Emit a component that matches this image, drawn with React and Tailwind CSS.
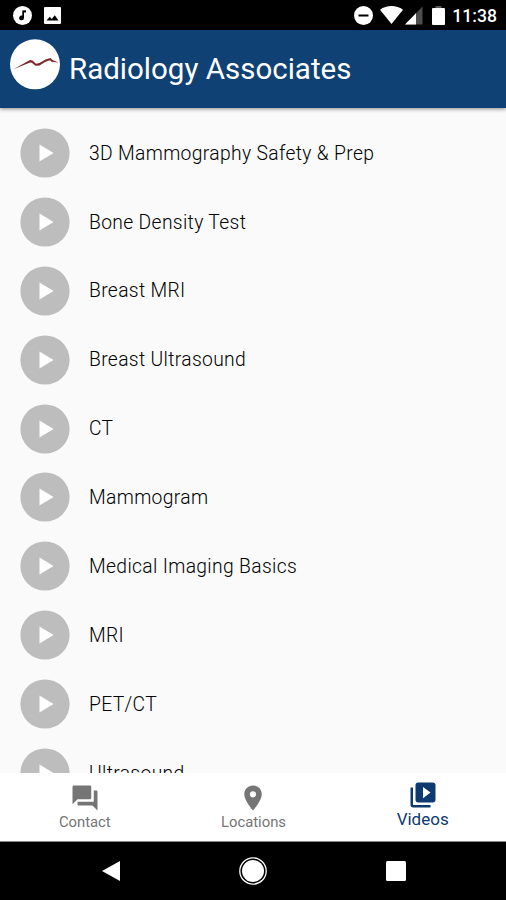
import { useState } from 'react'
import { MdForum, MdPlace, MdVideoLibrary } from 'react-icons/md'

const videos = [
    '3D Mammography Safety & Prep',
    'Bone Density Test',
    'Breast MRI',
    'Breast Ultrasound',
    'CT',
    'Mammogram',
    'Medical Imaging Basics',
    'MRI',
    'PET/CT',
    'Ultrasound',
]

const tabs = [
    { name: 'Contact', icon: MdForum },
    { name: 'Locations', icon: MdPlace },
    { name: 'Videos', icon: MdVideoLibrary },
]

function StatusBar() {
    return (
        <div className="flex h-[30px] shrink-0 items-center justify-between bg-black pl-[13px] pr-[9px] text-white">
            <div className="flex items-center gap-3">
                <svg width="19" height="19" viewBox="0 0 19 19">
                    <circle cx="9.5" cy="9.5" r="9.5" fill="#fff" />
                    <path d="M9.3 4.6 L13 4.2 V6.6 H11 V12 A2.4 2.4 0 1 1 9.3 9.6 Z" fill="#000" />
                </svg>
                <svg width="17" height="17" viewBox="0 0 17 17">
                    <rect width="17" height="17" rx="1" fill="#fff" />
                    <path d="M2.5 13.5 L5.8 9.8 L7.8 12 L10.8 8.2 L14.5 13.5 Z" fill="#000" />
                </svg>
            </div>
            <div className="flex items-center">
                <svg width="19" height="19" viewBox="0 0 19 19">
                    <circle cx="9.5" cy="9.5" r="9.5" fill="#fff" />
                    <rect x="4.5" y="8.5" width="10" height="2" fill="#000" />
                </svg>
                <svg className="ml-[7px]" width="23" height="18" viewBox="0 0 23 18">
                    <path d="M0 3.8 C6.5 -1.2 16.5 -1.2 23 3.8 L11.5 18 Z" fill="#fff" />
                </svg>
                <svg className="ml-[2px]" width="18" height="19" viewBox="0 0 18 19">
                    <path d="M0 18.5 L17.5 0.5 V18.5 Z" fill="#4d4d4d" />
                    <path d="M0 18.5 L11 7.2 V18.5 Z" fill="#fff" />
                </svg>
                <svg className="ml-[9px]" width="13" height="19" viewBox="0 0 13 19">
                    <rect x="3.5" y="0" width="6" height="3" fill="#555" />
                    <rect x="0" y="2" width="13" height="17" rx="1" fill="#fff" />
                </svg>
                <span className="ml-[7px] mt-px text-[17.6px] leading-[30px] font-medium">11:38</span>
            </div>
        </div>
    )
}

function Header() {
    return (
        <div className="z-10 flex h-[78px] shrink-0 bg-[#0f4174] pl-[10px] pt-[9px] shadow-[0_1px_4px_rgba(0,0,0,0.45)]">
            <svg width="50" height="51" viewBox="0 0 50 51">
                <circle cx="25" cy="25.3" r="25" fill="#fff" />
                <path d="M3.5 30.3 L20 21 L22.5 21.6 L26 24.8 L29.5 24 L35.5 20.5 L40.5 19 L42.5 21 L48.5 23.5 L41.5 22.8 L40 21.3 L35.5 22.7 L29.5 26.4 L25.5 26.8 L21.8 23.8 L20 23.4 Z" fill="#7d2427" />
            </svg>
            <h1 className="ml-[9px] mt-[10px] text-[29.5px] leading-10 whitespace-nowrap text-white">Radiology Associates</h1>
        </div>
    )
}

function VideoRow({ title }) {
    return (
        <li className="flex h-[68.9px] shrink-0 items-center pl-5">
            <svg width="50" height="50" viewBox="0 0 50 50">
                <circle cx="25" cy="25" r="24.6" fill="#bdbdbd" />
                <path d="M19.5 16.5 V33.5 L33.5 25 Z" fill="#fff" />
            </svg>
            <span className="ml-[19px] mt-[2.4px] text-[19.3px] font-light tracking-[0.34px] whitespace-nowrap text-black">{title}</span>
        </li>
    )
}

function NavBar() {
    return (
        <div className="flex h-[58px] shrink-0 items-center justify-between bg-black pl-[102px] pr-[100px]">
            <svg width="18" height="20" viewBox="0 0 18 20">
                <path d="M0 10 L18 0 V20 Z" fill="#fff" />
            </svg>
            <svg width="28" height="28" viewBox="0 0 28 28">
                <circle cx="14" cy="14" r="13.2" fill="none" stroke="#fff" strokeWidth="1.3" />
                <circle cx="14" cy="14" r="11" fill="#fff" />
            </svg>
            <svg width="20" height="20" viewBox="0 0 20 20">
                <rect width="20" height="20" rx="1.5" fill="#fff" />
            </svg>
        </div>
    )
}

export default function App() {
    const [active, setActive] = useState('Videos')

    return (
        <div className="flex h-[900px] w-[506px] flex-col overflow-hidden bg-[#fafafa] font-['Roboto',sans-serif]">
            <StatusBar />
            <Header />
            <ul className="flex min-h-0 flex-1 flex-col overflow-hidden pt-[10.5px]">
                {videos.map(v => <VideoRow key={v} title={v} />)}
            </ul>
            <div className="grid h-[69px] shrink-0 grid-cols-3 border-b border-[#8a8a8a] bg-white">
                {tabs.map(t => {
                    const on = t.name === active
                    return (
                        <button
                            key={t.name}
                            onClick={() => setActive(t.name)}
                            className={on ? 'flex flex-col items-center pl-0.5 pt-[7px] text-[#0d3a70]' : 'flex flex-col items-center pl-px pt-[10px] text-[#757575]'}
                        >
                            <t.icon size={30} />
                            <span className={on ? '-mt-px text-[17px] leading-5' : '-mt-px text-[14.8px] leading-5'}>{t.name}</span>
                        </button>
                    )
                })}
            </div>
            <NavBar />
        </div>
    )
}
